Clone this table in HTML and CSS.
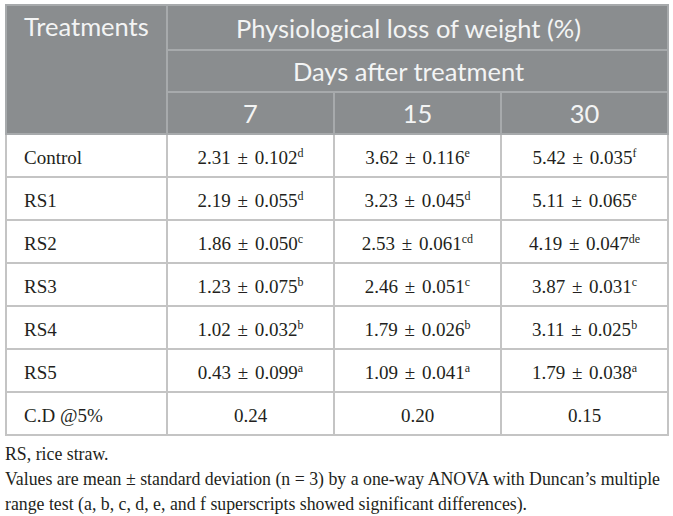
FILE: index.html
```html
<!DOCTYPE html>
<html>
<head>
<meta charset="utf-8">
<link rel="stylesheet" href="styles.css">
</head>
<body>
<div class="wrap">
<table class="data">
  <colgroup>
    <col class="c0"><col class="c1"><col class="c1"><col class="c1">
  </colgroup>
  <thead>
    <tr class="h1">
      <th rowspan="3" class="treat">Treatments</th>
      <th colspan="3" class="span">Physiological loss of weight (%)</th>
    </tr>
    <tr class="h2">
      <th colspan="3" class="span">Days after treatment</th>
    </tr>
    <tr class="h3">
      <th>7</th><th>15</th><th>30</th>
    </tr>
  </thead>
  <tbody>
    <tr><td class="name">Control</td><td>2.31 ± 0.102<sup>d</sup></td><td>3.62 ± 0.116<sup>e</sup></td><td>5.42 ± 0.035<sup>f</sup></td></tr>
    <tr><td class="name">RS1</td><td>2.19 ± 0.055<sup>d</sup></td><td>3.23 ± 0.045<sup>d</sup></td><td>5.11 ± 0.065<sup>e</sup></td></tr>
    <tr><td class="name">RS2</td><td>1.86 ± 0.050<sup>c</sup></td><td>2.53 ± 0.061<sup>cd</sup></td><td>4.19 ± 0.047<sup>de</sup></td></tr>
    <tr><td class="name">RS3</td><td>1.23 ± 0.075<sup>b</sup></td><td>2.46 ± 0.051<sup>c</sup></td><td>3.87 ± 0.031<sup>c</sup></td></tr>
    <tr><td class="name">RS4</td><td>1.02 ± 0.032<sup>b</sup></td><td>1.79 ± 0.026<sup>b</sup></td><td>3.11 ± 0.025<sup>b</sup></td></tr>
    <tr><td class="name">RS5</td><td>0.43 ± 0.099<sup>a</sup></td><td>1.09 ± 0.041<sup>a</sup></td><td>1.79 ± 0.038<sup>a</sup></td></tr>
    <tr><td class="name">C.D @5%</td><td>0.24</td><td>0.20</td><td>0.15</td></tr>
  </tbody>
</table>
<div class="notes">
  <p>RS, rice straw.</p>
  <p>Values are mean ± standard deviation (n = 3) by a one-way ANOVA with Duncan’s multiple range test (a, b, c, d, e, and f superscripts showed significant differences).</p>
</div>
</div>
</body>
</html>
```

FILE: styles.css
```css
html, body {
  margin: 0;
  padding: 0;
  background: #ffffff;
}

.wrap {
  padding: 4px 0 0 5px;
}

.data {
  width: 662px;
  border-collapse: collapse;
  table-layout: fixed;
  border: 2px solid #b3b3b3;
}

.c0 { width: 161px; }
.c1 { width: 167px; }

.data th {
  background: #8a8d8f;
  color: #f3f4f4;
  font-family: Lato, "Open Sans", sans-serif;
  font-weight: 400;
  font-size: 25.5px;
  text-align: center;
  border: 2px solid #a7aaac;
  padding: 0;
  line-height: 30px;
}

.data th.span {
  padding-right: 18px;
}

.h1 th { height: 43px; }
.h2 th { height: 40px; }
.h3 th { height: 40px; }

.data th.treat {
  text-align: left;
  vertical-align: top;
  padding: 5px 0 0 17px;
}

.data td {
  font-family: "Liberation Serif", "Times New Roman", serif;
  font-size: 19px;
  color: #231f20;
  text-align: center;
  border: 2px solid #c4c4c4;
  height: 36px;
  padding: 5px 0 0 0;
  line-height: 20px;
  word-spacing: 2px;
}

.data td.name {
  text-align: left;
  padding-left: 17px;
  word-spacing: 0;
}

.data sup {
  font-size: 12px;
  line-height: 0;
  vertical-align: 7px;
}

.notes {
  font-family: "Liberation Serif", "Times New Roman", serif;
  font-size: 17.8px;
  color: #231f20;
  padding-top: 6px;
}

.notes p {
  margin: 0;
  line-height: 25px;
}
```
